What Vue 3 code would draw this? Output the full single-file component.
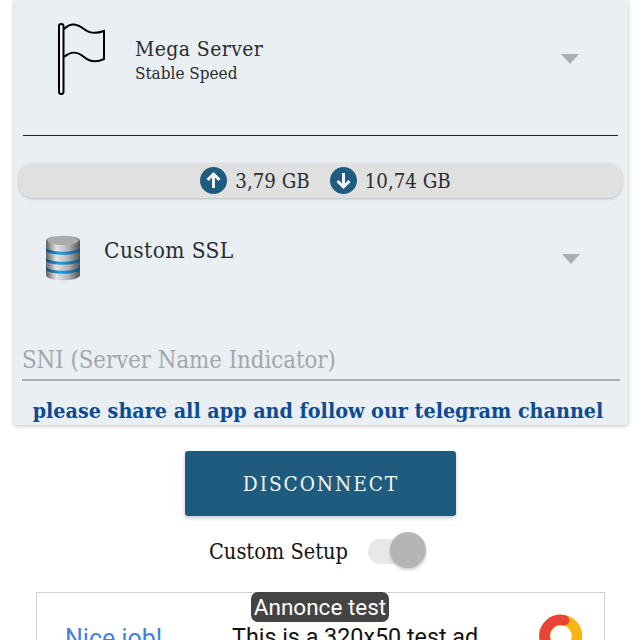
<template>
  <div class="page">
    <section class="card">
      <div class="server-row">
        <svg class="flag" width="50" height="74" viewBox="0 0 50 74">
          <rect x="2" y="2" width="4.500" height="70" rx="2.250" fill="#f4f7f9" stroke="#000" stroke-width="2" />
          <path d="M7 7 C14 0 20 2 27 7 C33 12 39 12 47 9 L47 37 C39 41 33 40 27 35 C20 29 14 29 7 35" fill="none" stroke="#000" stroke-width="2" />
        </svg>
        <div class="server-text">
          <div class="server-name">Mega Server</div>
          <div class="server-sub">Stable Speed</div>
        </div>
        <span class="caret"></span>
      </div>

      <div class="usage">
        <span class="usage-icon">
          <svg width="27" height="27" viewBox="0 0 27 27"><circle cx="13.500" cy="13.500" r="13.500" fill="#1f5b7f" /><path d="M13.500 21 V7 M7.500 13 L13.500 7 L19.500 13" fill="none" stroke="#f2f6f8" stroke-width="3" /></svg>
        </span>
        <span class="usage-value">{{ upload }}</span>
        <span class="usage-icon second">
          <svg width="27" height="27" viewBox="0 0 27 27"><circle cx="13.500" cy="13.500" r="13.500" fill="#1f5b7f" /><path d="M13.500 6 V20 M7.500 14 L13.500 20 L19.500 14" fill="none" stroke="#f2f6f8" stroke-width="3" /></svg>
        </span>
        <span class="usage-value">{{ download }}</span>
      </div>

      <div class="ssl-row">
        <svg class="db" width="36" height="48" viewBox="0 0 36 48">
          <defs>
            <linearGradient id="metal" x1="0" x2="1" y1="0" y2="0">
              <stop offset="0" stop-color="#5f6163" />
              <stop offset="0.3" stop-color="#e2e3e3" />
              <stop offset="0.65" stop-color="#b4b5b6" />
              <stop offset="1" stop-color="#4f5153" />
            </linearGradient>
            <linearGradient id="band" x1="0" x2="1" y1="0" y2="0">
              <stop offset="0" stop-color="#0f4778" />
              <stop offset="0.4" stop-color="#1fa2e6" />
              <stop offset="1" stop-color="#0f4f86" />
            </linearGradient>
          </defs>
          <path d="M1 7 C1 0 35 0 35 7 V41 C35 48 1 48 1 41 Z" fill="url(#metal)" />
          <ellipse cx="18" cy="6.500" rx="15.500" ry="4.500" fill="#a9abac" />
          <path d="M1 14 C6 19 30 19 35 14 V17 C30 22 6 22 1 17 Z" fill="url(#band)" />
          <path d="M1 24 C6 29 30 29 35 24 V27 C30 32 6 32 1 27 Z" fill="url(#band)" />
          <path d="M1 33 C6 38 30 38 35 33 V36 C30 41 6 41 1 36 Z" fill="url(#band)" />
        </svg>
        <div class="ssl-name">Custom SSL</div>
        <span class="caret ssl-caret"></span>
      </div>

      <div class="sni">SNI (Server Name Indicator)</div>
      <div class="promo">please share all app and follow our telegram channel</div>
    </section>

    <button class="connect">DISCONNECT</button>

    <div class="setup">
      <span class="setup-label">Custom Setup</span>
      <span class="switch"><span class="knob"></span></span>
    </div>

    <div class="ad">
      <span class="ad-badge">Annonce test</span>
      <span class="ad-title">Nice job!</span>
      <span class="ad-text">This is a 320x50 test ad.</span>
      <svg class="ad-logo" width="44" height="44" viewBox="0 0 44 44">
        <circle cx="22" cy="22" r="16" fill="none" stroke="#f8b512" stroke-width="10.500" />
        <path d="M25 6.300 A16 16 0 0 0 6 26" fill="none" stroke="#ea4335" stroke-width="10.500" stroke-linecap="round" />
      </svg>
    </div>
  </div>
</template>

<script setup>
const upload = '3,79 GB'
const download = '10,74 GB'
</script>

<style>
html, body {
  margin: 0;
  background: #fff;
}
</style>

<style scoped>
.page {
  width: 640px;
  height: 640px;
  overflow: hidden;
  display: flex;
  flex-direction: column;
  align-items: flex-start;
  background: #fff;
  font-family: "DejaVu Serif Condensed", "DejaVu Serif", serif;
  color: #2a2d30;
}

.card {
  box-sizing: border-box;
  width: 614px;
  height: 425px;
  margin-left: 14px;
  flex-shrink: 0;
  padding: 0 6px 0 5px;
  background: #e9eff3;
  box-shadow: 0 1px 4px rgba(0, 0, 0, 0.25);
  display: flex;
  flex-direction: column;
}

.server-row {
  height: 135px;
  margin: 0 4px;
  border-bottom: 1px solid #222;
  display: flex;
  align-items: flex-start;
  flex-shrink: 0;
}

.flag {
  margin: 22px 0 0 34px;
}

.server-text {
  margin: 36px 0 0 28px;
}

.server-name {
  font-size: 21px;
  line-height: 26px;
  letter-spacing: 0.4px;
}

.server-sub {
  font-size: 17px;
  line-height: 23px;
}

.caret {
  margin: 54px 39px 0 auto;
  width: 0;
  height: 0;
  border-left: 9px solid transparent;
  border-right: 9px solid transparent;
  border-top: 10px solid #a8aeb3;
}

.usage {
  margin-top: 27px;
  height: 35px;
  flex-shrink: 0;
  padding-left: 10px;
  border-radius: 14px;
  background: #e0e0e0;
  box-shadow: 0 1px 3px rgba(0, 0, 0, 0.22);
  display: flex;
  align-items: center;
  justify-content: center;
}

.usage-icon {
  display: flex;
  margin-right: 8px;
}

.usage-icon.second {
  margin-left: 20px;
}

.usage-value {
  font-size: 20.300px;
}

.ssl-row {
  display: flex;
  align-items: flex-start;
  height: 109px;
  flex-shrink: 0;
}

.db {
  margin: 36px 0 0 26px;
}

.ssl-name {
  margin: 37px 0 0 23px;
  font-size: 22.500px;
  line-height: 30px;
  letter-spacing: 0.4px;
}

.ssl-caret {
  margin-top: 56px;
  margin-right: 42px;
}

.sni {
  margin: 0 2px 0 3px;
  height: 74px;
  box-sizing: border-box;
  border-bottom: 2px solid #a9adb1;
  font-size: 23.700px;
  line-height: 30px;
  padding-top: 38px;
  color: #a3a7aa;
  flex-shrink: 0;
}

.promo {
  margin-top: 16px;
  padding-right: 5px;
  font-size: 21.300px;
  line-height: 28px;
  font-weight: 700;
  color: #0f4a93;
  text-align: center;
  white-space: nowrap;
}

.connect {
  margin-top: 26px;
  margin-left: 185px;
  padding: 1px 0 0 1px;
  width: 271px;
  height: 65px;
  flex-shrink: 0;
  border: none;
  border-radius: 3px;
  background: #1f5b7f;
  box-shadow: 0 2px 4px rgba(0, 0, 0, 0.22);
  color: #f4f7f9;
  font-family: inherit;
  font-size: 20.700px;
  letter-spacing: 1.900px;
}

.setup {
  margin-top: 16px;
  margin-left: 209px;
  display: flex;
  align-items: center;
  height: 38px;
  flex-shrink: 0;
}

.setup-label {
  font-size: 21.600px;
  color: #111;
}

.switch {
  position: relative;
  margin-left: 20px;
  width: 48px;
  height: 25px;
  border-radius: 13px;
  background: #e8e8e8;
}

.knob {
  position: absolute;
  right: -10px;
  top: -7px;
  width: 36px;
  height: 36px;
  border-radius: 50%;
  background: #b5b5b5;
  box-shadow: 0 2px 3px rgba(0, 0, 0, 0.2);
}

.ad {
  position: relative;
  box-sizing: border-box;
  margin-top: 22px;
  margin-left: 36px;
  width: 569px;
  height: 60px;
  flex-shrink: 0;
  border: 1.500px solid #cfcfcf;
  font-family: Roboto, sans-serif;
}

.ad-badge {
  position: absolute;
  left: 214px;
  top: -1px;
  width: 138px;
  height: 30px;
  border-radius: 7px;
  background: #444;
  color: #fff;
  font-size: 22.500px;
  line-height: 30px;
  text-align: center;
}

.ad-title {
  position: absolute;
  left: 28px;
  top: 31px;
  font-size: 25px;
  color: #3f82de;
}

.ad-text {
  position: absolute;
  left: 195px;
  top: 30px;
  font-size: 23.300px;
  color: #111;
  white-space: nowrap;
}

.ad-logo {
  position: absolute;
  left: 502px;
  top: 21px;
}
</style>
